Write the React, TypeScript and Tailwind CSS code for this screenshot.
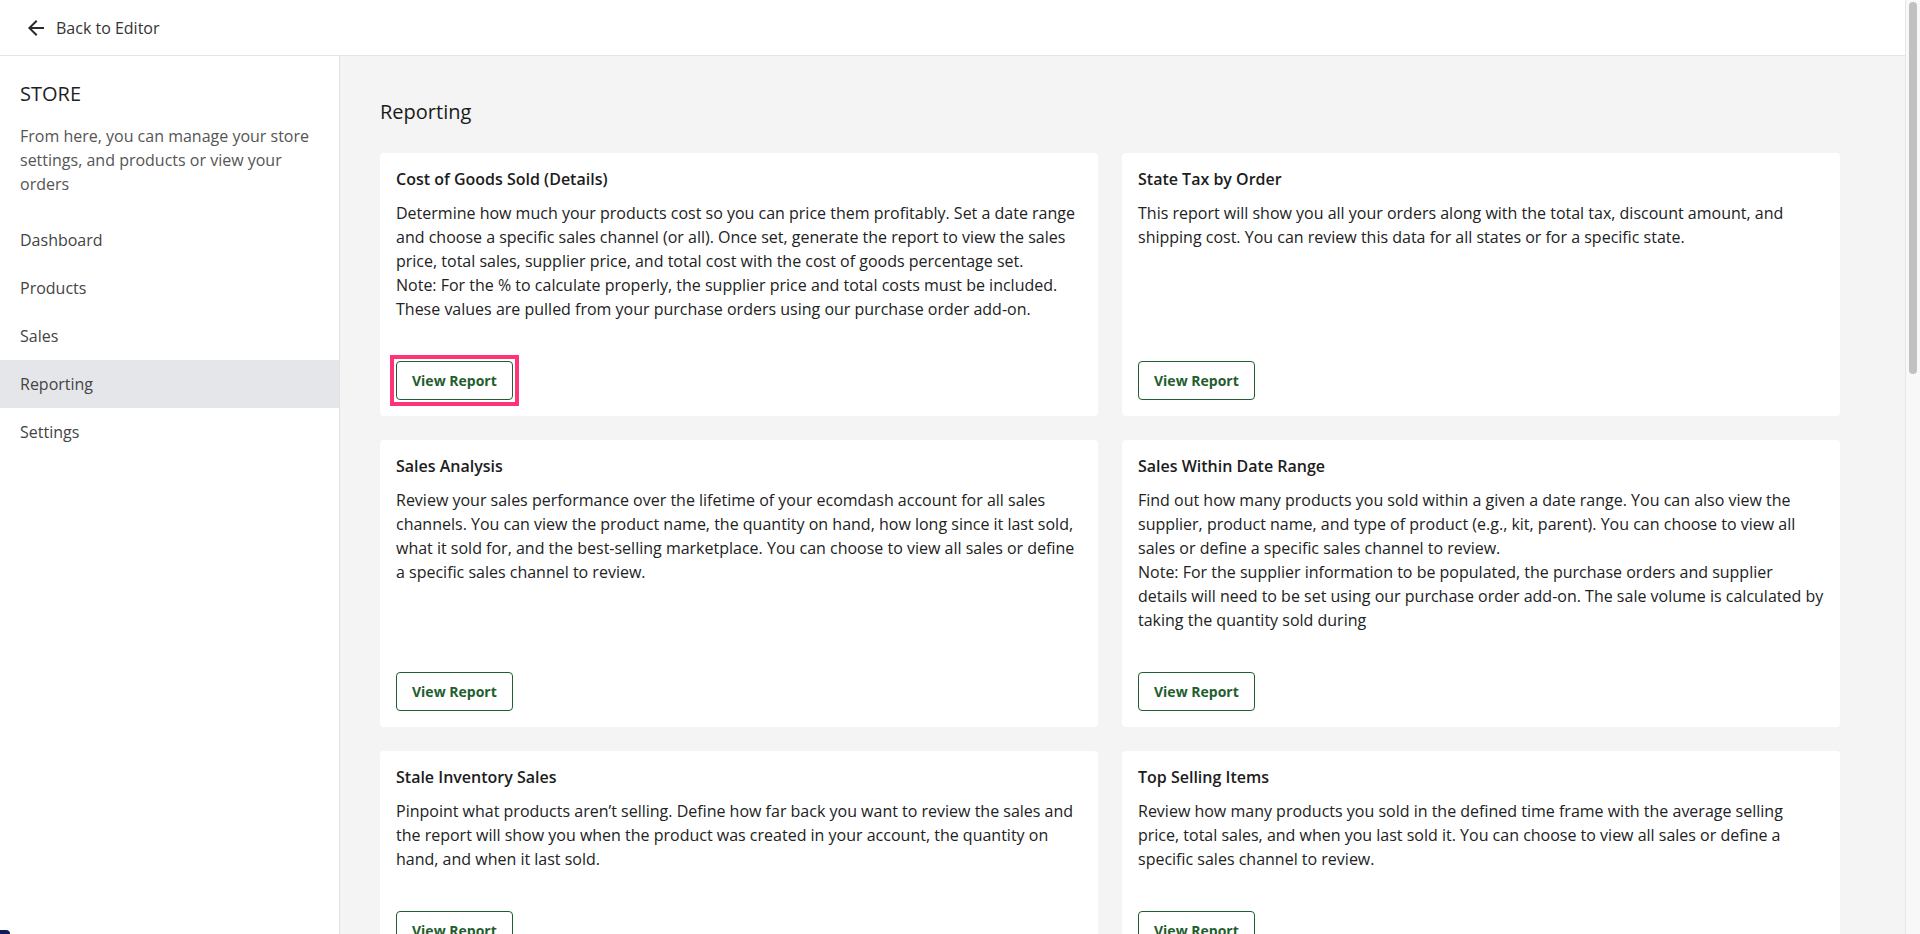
import { MdArrowBack } from 'react-icons/md';

type Report = {
  title: string;
  body: string[];
  focused?: boolean;
};

const reports: Report[] = [
  {
    title: 'Cost of Goods Sold (Details)',
    body: [
      'Determine how much your products cost so you can price them profitably. Set a date range and choose a specific sales channel (or all). Once set, generate the report to view the sales price, total sales, supplier price, and total cost with the cost of goods percentage set.',
      'Note: For the % to calculate properly, the supplier price and total costs must be included. These values are pulled from your purchase orders using our purchase order add-on.',
    ],
    focused: true,
  },
  {
    title: 'State Tax by Order',
    body: [
      'This report will show you all your orders along with the total tax, discount amount, and shipping cost. You can review this data for all states or for a specific state.',
    ],
  },
  {
    title: 'Sales Analysis',
    body: [
      'Review your sales performance over the lifetime of your ecomdash account for all sales channels. You can view the product name, the quantity on hand, how long since it last sold, what it sold for, and the best-selling marketplace. You can choose to view all sales or define a specific sales channel to review.',
    ],
  },
  {
    title: 'Sales Within Date Range',
    body: [
      'Find out how many products you sold within a given a date range. You can also view the supplier, product name, and type of product (e.g., kit, parent). You can choose to view all sales or define a specific sales channel to review.',
      'Note: For the supplier information to be populated, the purchase orders and supplier details will need to be set using our purchase order add-on. The sale volume is calculated by taking the quantity sold during',
    ],
  },
  {
    title: 'Stale Inventory Sales',
    body: [
      'Pinpoint what products aren\u2019t selling. Define how far back you want to review the sales and the report will show you when the product was created in your account, the quantity on hand, and when it last sold.',
    ],
  },
  {
    title: 'Top Selling Items',
    body: [
      'Review how many products you sold in the defined time frame with the average selling price, total sales, and when you last sold it. You can choose to view all sales or define a specific sales channel to review.',
    ],
  },
];

const navItems = ['Dashboard', 'Products', 'Sales', 'Reporting', 'Settings'];

function ReportCard({ report }: { report: Report }) {
  return (
    <div className="flex flex-col rounded bg-white p-4">
      <h3 className="mb-3 text-base leading-5 font-semibold text-[#1c1c1c]">{report.title}</h3>
      <div className="flex-1 text-base leading-6 text-[#222]">
        {report.body.map((line) => (
          <p key={line}>{line}</p>
        ))}
      </div>
      <div className="mt-10">
        <button
          type="button"
          className="relative h-[39px] rounded border border-[#1f5e2e] bg-white px-[15px] text-sm leading-5 font-bold text-[#1f5e2e]"
        >
          View Report
          {report.focused && (
            <span className="pointer-events-none absolute -inset-[7px] border-4 border-[#ff3478]" />
          )}
        </button>
      </div>
    </div>
  );
}

export default function App() {
  return (
    <div className="relative flex h-screen overflow-hidden bg-white font-['Open_Sans',sans-serif] text-[#262626]">
      <div className="flex min-w-0 flex-1 flex-col">
        <header className="flex h-[56px] shrink-0 items-center gap-2 border-b border-[#e4e4e4] bg-white px-6">
          <MdArrowBack size={24} className="text-[#2a2a2a]" />
          <span className="text-base text-[#333]">Back to Editor</span>
        </header>
        <div className="flex flex-1">
          <aside className="w-[340px] shrink-0 border-r border-[#e2e2e2] bg-white pt-6">
            <div className="px-5">
              <h2 className="text-xl leading-7 font-medium text-[#1f1f1f]">STORE</h2>
              <p className="mt-4 text-base leading-6 text-[#555]">
                From here, you can manage your store settings, and products or view your orders
              </p>
            </div>
            <nav className="mt-5 flex flex-col">
              {navItems.map((item) => (
                <div
                  key={item}
                  className={`flex h-12 items-center px-5 text-base text-[#444] ${
                    item === 'Reporting' ? 'bg-[#e5e6ea]' : ''
                  }`}
                >
                  {item}
                </div>
              ))}
            </nav>
          </aside>
          <main className="flex-1 bg-[#f4f4f4] pt-[42px] pl-10">
            <h1 className="mb-[27px] text-xl leading-7 font-medium text-[#1a1a1a]">Reporting</h1>
            <div className="grid grid-cols-[718px_718px] gap-6">
              {reports.map((r) => (
                <ReportCard key={r.title} report={r} />
              ))}
            </div>
          </main>
        </div>
      </div>
      <div className="w-[15px] shrink-0 border-l border-[#e6e6e6] bg-[#f8f8f8] px-[3px] pt-[2px]">
        <div className="h-[372px] rounded-full bg-[#c1c1c1]" />
      </div>
      <div className="absolute bottom-0 left-0 h-[4px] w-[10px] rounded-tr-full bg-[#0b1d5a]" />
    </div>
  );
}
